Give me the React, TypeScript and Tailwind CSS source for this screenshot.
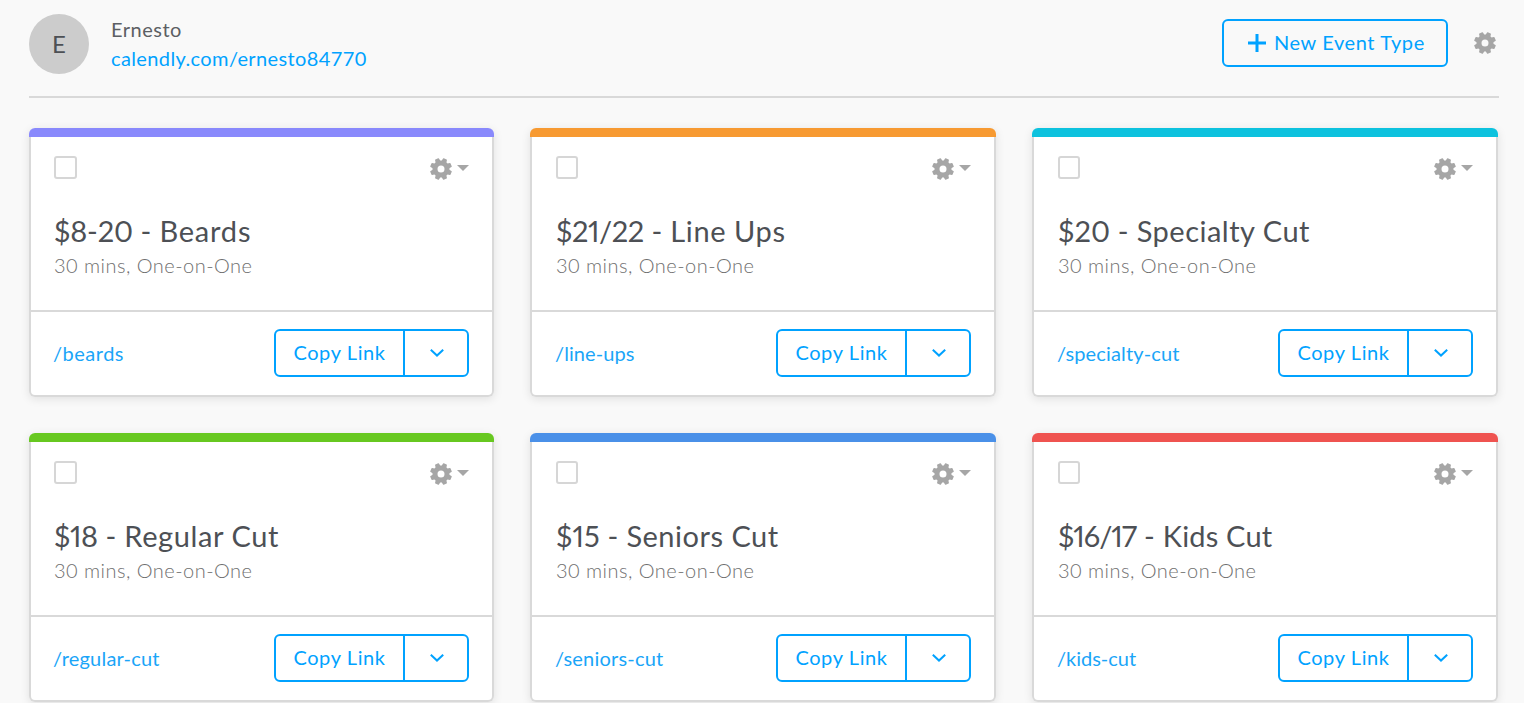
import React from "react";

type EventType = {
  price: string;
  name: string;
  slug: string;
  bar: string;
  priceTracking: string;
  nameTracking: string;
  slugTracking: string;
};

const events: EventType[] = [
  { price: "$8-20", name: "Beards", slug: "/beards", bar: "bg-[#8989fc]", priceTracking: "tracking-[-0.15px]", nameTracking: "tracking-[0.8px]", slugTracking: "tracking-[0.5px]" },
  { price: "$21/22", name: "Line Ups", slug: "/line-ups", bar: "bg-[#f79a32]", priceTracking: "tracking-[-0.4px]", nameTracking: "tracking-[0.6px]", slugTracking: "tracking-[0.1px]" },
  { price: "$20", name: "Specialty Cut", slug: "/specialty-cut", bar: "bg-[#0dc2de]", priceTracking: "tracking-[0.1px]", nameTracking: "tracking-[0.5px]", slugTracking: "tracking-[0.15px]" },
  { price: "$18", name: "Regular Cut", slug: "/regular-cut", bar: "bg-[#67c820]", priceTracking: "tracking-[-0.35px]", nameTracking: "tracking-[0.6px]", slugTracking: "tracking-[0.2px]" },
  { price: "$15", name: "Seniors Cut", slug: "/seniors-cut", bar: "bg-[#4a90e8]", priceTracking: "tracking-[0.1px]", nameTracking: "tracking-[0.5px]", slugTracking: "tracking-[0.2px]" },
  { price: "$16/17", name: "Kids Cut", slug: "/kids-cut", bar: "bg-[#ef5350]", priceTracking: "tracking-[-1px]", nameTracking: "tracking-[0.2px]", slugTracking: "tracking-[0px]" },
];

const teeth = [22.5, 67.5, 112.5, 157.5, 202.5, 247.5, 292.5, 337.5];

function Gear() {
  return (
    <svg width="22" height="22" viewBox="0 0 22 22" className="block shrink-0 text-[#a6a6a6]">
      <circle cx="11" cy="11" r="6" fill="none" stroke="currentColor" strokeWidth="5" />
      {teeth.map((a) => (
        <path key={a} d="M8.3 4 L8.9 0.6 Q9 0 9.5 0 H12.5 Q13 0 13.1 0.6 L13.7 4 Z" fill="currentColor" transform={`rotate(${a} 11 11)`} />
      ))}
    </svg>
  );
}

function EventCard({ event }: { event: EventType }) {
  return (
    <article className="group flex h-[269px] flex-col rounded-[6px] shadow-[0_2px_10px_rgba(0,0,0,0.1)]">
      <div className={`h-[9px] shrink-0 rounded-t-[6px] ${event.bar}`} />
      <div className="flex flex-1 flex-col rounded-b-[6px] border-2 border-t-0 border-[#d9d9d9] bg-white">
        <div className="h-[175px] border-b-2 border-[#d9d9d9] pl-[24px] pr-[23px] pt-[19px] group-nth-[3n+1]:pl-[23px]">
          <div className="flex items-start justify-between">
            <span className="block h-[23px] w-[22px] rounded-[3px] border-2 border-[#d6d6d6] bg-white group-nth-[3n+1]:w-[23px]" />
            <button className="mt-[2px] flex items-center gap-[5.5px]">
              <Gear />
              <svg width="12" height="6" viewBox="0 0 12 6" className="mb-[2px] block text-[#a6a6a6]">
                <path d="M0 0H12L6 6Z" fill="currentColor" />
              </svg>
            </button>
          </div>
          <h2 className="mt-[32px] whitespace-pre text-[29px] leading-[38px] text-[#4d5055] proportional-nums">
            <span className={event.priceTracking}>{event.price}</span>
            <span className="tracking-[0.3px]">{" - "}</span>
            <span className={event.nameTracking}>{event.name}</span>
          </h2>
          <p className="-mt-px whitespace-nowrap text-[20px] font-light leading-[32px] tracking-[0.47px] text-[#707070]">30 mins, One-on-One</p>
        </div>
        <div className="flex items-start justify-between pl-[23px] pr-[23px] pt-[17px]">
          <a className={`-ml-px mt-[8px] whitespace-nowrap text-[20px] leading-[32px] text-[#1aa5f8] group-nth-[3n+2]:ml-0 group-nth-[3n]:ml-0 ${event.slugTracking}`}>{event.slug}</a>
          <div className="flex h-[48px] w-[195px] rounded-[6px] border-2 border-[#00a2ff] text-[#00a2ff]">
            <button className="w-[127px] whitespace-nowrap pb-[2px] text-[20px] leading-[42px] tracking-[0.6px]">Copy Link</button>
            <button className="flex flex-1 items-center justify-center border-l-2 border-[#00a2ff] pl-[2px]">
              <svg width="14" height="8" viewBox="0 0 14 8" className="block" fill="none" stroke="currentColor" strokeWidth="2">
                <path d="M0.8 0.8L7 6.6L13.2 0.8" />
              </svg>
            </button>
          </div>
        </div>
      </div>
    </article>
  );
}

export default function App() {
  return (
    <div className="h-[703px] w-full overflow-hidden bg-[#f9f9f9] pl-[29px] font-['Lato','Liberation_Sans',sans-serif]">
      <header className="flex h-[98px] w-[1470px] items-start border-b-2 border-[#d9d9d9]">
        <div className="mt-[14px] flex size-[60px] items-center justify-center rounded-full bg-[#cccccc] text-[24px] text-[#4d5055]">E</div>
        <div className="ml-[22px] mt-[15px] flex flex-col text-[20px] leading-[29px]">
          <span className="self-start tracking-[0.5px] text-[#5c5f64]">Ernesto</span>
          <a className="self-start tracking-[0.38px] text-[#00a2ff]">calendly.com/ernesto84770</a>
        </div>
        <button className="ml-auto mt-[19px] flex h-[48px] w-[226px] items-center rounded-[6px] border-2 border-[#00a2ff] pl-[24px] text-[#00a2ff]">
          <svg width="18" height="18" viewBox="0 0 18 18" className="block shrink-0" stroke="currentColor" strokeWidth="3">
            <path d="M0 9H18M9 0V18" />
          </svg>
          <span className="ml-[8px] whitespace-nowrap pb-[2px] text-[20px] tracking-[0.6px]">New Event Type</span>
        </button>
        <button className="ml-[26px] mr-[3px] mt-[32px]">
          <Gear />
        </button>
      </header>
      <main className="mt-[30px] grid grid-cols-[465px_466px_466px] gap-[36px]">
        {events.map((e) => (
          <EventCard key={e.slug} event={e} />
        ))}
      </main>
    </div>
  );
}
